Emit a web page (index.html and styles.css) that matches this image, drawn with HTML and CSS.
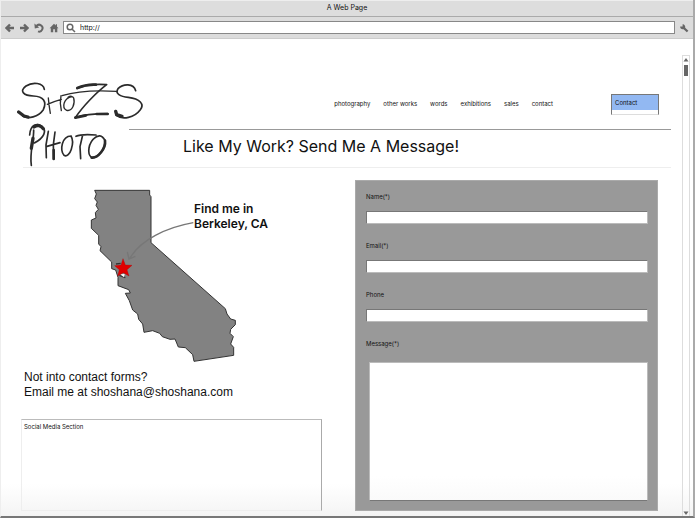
FILE: index.html
```html
<!DOCTYPE html>
<html lang="en">
<head>
<meta charset="utf-8">
<title>A Web Page</title>
<link rel="stylesheet" href="styles.css">
</head>
<body>
<div class="window">
  <div class="titlebar">A Web Page</div>
  <div class="toolbar">
    <button class="tool" aria-label="Back"><svg viewBox="0 0 10 10"><path d="M9 5H2M5 1.5L1.5 5L5 8.5"/></svg></button>
    <button class="tool" aria-label="Forward"><svg viewBox="0 0 10 10"><path d="M1 5H8M5 1.5L8.5 5L5 8.5"/></svg></button>
    <button class="tool tool-reload" aria-label="Reload"><svg viewBox="0 0 10 10"><path class="mid" d="M2.5 3A3.4 3.4 0 1 1 4 8.4"/><path class="solid" d="M.4 .6L.8 5.4L5.2 4.4Z"/></svg></button>
    <button class="tool" aria-label="Home"><svg viewBox="0 0 10 10"><path class="solid" d="M5 .8L.6 5.2H1.8V9.2H4.2V6.3H5.9V9.2H8.3V5.2H9.5L8 3.7V1.3H6.8V2.5Z"/></svg></button>
    <div class="address">
      <svg viewBox="0 0 10 10"><circle class="thin" cx="4" cy="4" r="2.8"/><path class="thin" d="M6.2 6.2L9 9"/></svg>
      <input type="text" value="http://" aria-label="Address">
    </div>
    <button class="tool" aria-label="Settings"><svg viewBox="0 0 10 10"><path class="solid" d="M3.6 1.2V3.6H1.2C.8 5.4 2.8 6.8 4.6 6.2L7.8 9.2L9.4 7.8L6.2 4.8C6.6 3 5.4 1 3.6 1.2Z"/></svg></button>
  </div>
  <div class="viewport">
    <main class="page">
      <header class="header">
        <svg class="logo" viewBox="0 0 384 258" role="img" aria-label="ShoZS Photo">
          <g transform="translate(-51 -36)">
            <path class="w5" d="M133 58C130 38 98 35 78 48C56 64 72 77 100 78C131 79 141 96 130 119C115 141 84 148 68 138"/>
            <path class="w10" d="M56 126L72 138L84 141"/>
            <path class="w4" d="M145 84L147 104L151 130M142 103C155 97 170 92 184 88M183 77L181 100L184 122M216 80C191 84 184 113 200 121C217 125 226 101 221 84C219 78 211 77 204 82"/>
            <path class="w5" d="M231 55C255 44 290 42 320 44C292 65 250 107 226 143C250 134 286 131 323 131"/>
            <path class="w7" d="M232 54C250 46 270 43 288 44M226 143L258 136M290 132H323"/>
            <path class="w4" d="M186 77C225 65 285 60 350 64"/>
            <path class="w5" d="M407 62C401 39 369 41 354 56C344 71 361 80 385 82C420 86 434 103 421 119C403 143 368 151 349 136"/>
            <path class="w10" d="M347 124L350 134L366 139"/>
            <path class="w5" d="M101 180C102 210 88 250 94 286M89 195C91 163 112 158 126 169C141 182 133 203 103 219"/>
            <path class="w10" d="M102 171C112 163 122 166 130 176M99 205L94 235"/>
            <path class="w5" d="M145 184L138 225L139 263M165 186L160 224L161 267M141 229L180 218M213 198C185 199 179 240 192 256C210 266 225 218 213 198"/>
            <path class="w5" d="M228 199C242 192 263 193 288 195M248 195L240 230L242 266M286 202C265 217 260 252 275 263C294 265 318 235 315 212C306 193 294 194 280 207"/>
            <path class="w7" d="M275 263C294 265 318 235 315 212M161 240V267"/>
          </g>
        </svg>
        <div class="masthead">
          <nav class="nav">
            <a href="#">photography</a>
            <a href="#">other works</a>
            <a href="#">words</a>
            <a href="#">exhibitions</a>
            <a href="#">sales</a>
            <a href="#">contact</a>
          </nav>
          <div class="submenu"><a href="#">Contact</a></div>
        </div>
        <h1>Like My Work? Send Me A Message!</h1>
      </header>
      <div class="columns">
        <section class="info">
          <figure class="map">
            <svg viewBox="0 0 600 570" role="img" aria-label="Map of California">
              <path class="state" d="M44 31H209V45L213 50V188L436 386L441 402L452 417L466 421V434L452 448L450 460L460 470L452 492L461 502V526L342 544L338 524L316 503L295 501L285 477L270 478L247 470L239 460L218 452L192 457L188 432L176 418L173 402L158 390L148 362L136 340L151 339L146 329L114 317V292L107 270L95 266V246L60 212L63 200L56 192V166L34 145V120L48 114L46 98L55 88L48 76L52 66L44 56L49 42Z"/>
              <path class="inlet" d="M108 252L122 250M118 286L136 293"/>
              <path class="bay" d="M121 283L134 282L132 292Z"/>
              <path class="arrow" d="M340 128C260 142 180 180 149 236M142 216L147 237L166 229"/>
              <path class="star" d="M129 236L136 255L156 256L141 269L147 288L130 278L113 288L118 269L104 257L123 255Z"/>
            </svg>
            <figcaption>Find me in<br>Berkeley, CA</figcaption>
          </figure>
          <p class="note">Not into contact forms?<br>Email me at shoshana@shoshana.com</p>
          <div class="social">Social Media Section</div>
        </section>
        <form class="form">
          <label for="name">Name(*)</label>
          <input id="name" type="text">
          <label for="email">Email(*)</label>
          <input id="email" type="email">
          <label for="phone">Phone</label>
          <input id="phone" type="tel">
          <label for="message">Message(*)</label>
          <textarea id="message"></textarea>
        </form>
      </div>
    </main>
    <div class="scrollbar">
      <svg viewBox="0 0 6 4"><path d="M3 0L5.5 3.5H.5Z"/></svg>
      <div class="thumb"></div>
      <svg class="down" viewBox="0 0 6 4"><path d="M3 4L5.5 .5H.5Z"/></svg>
    </div>
  </div>
</div>
</body>
</html>
```
FILE: styles.css
```css
* { box-sizing: border-box; }

body {
  margin: 0;
  background: #fff;
  color: #111;
  font-family: Inter, "Liberation Sans", sans-serif;
  font-size: 6px;
  line-height: 12px;
}

a { color: inherit; text-decoration: none; }

.window {
  display: flex;
  flex-direction: column;
  min-height: 100vh;
  border-left: 1px solid #eee;
  border-right: 2px solid #aaa;
  border-bottom: 2px solid #777;
}

.titlebar {
  height: 17px;
  border-top: 1px solid #eee;
  border-bottom: 1px solid #aaa;
  background: #ddd;
  line-height: 14px;
  text-align: center;
}

.toolbar {
  display: flex;
  align-items: center;
  gap: 4px;
  height: 22px;
  padding: 0 4px;
  border-bottom: 1px solid #ccc;
  background: #dcdcdc;
}

.tool {
  display: flex;
  width: 10px;
  height: 10px;
  padding: 0;
  border: 0;
  background: none;
}

.tool-reload { margin: 0 1px; }

.toolbar svg {
  flex: none;
  width: 10px;
  height: 10px;
  fill: none;
  stroke: #666;
  stroke-width: 2.4;
}

.toolbar .thin { stroke-width: 1.5; }
.toolbar .mid { stroke-width: 2; }
.toolbar .solid { fill: #666; stroke: none; }

.titlebar,
.address input { font-size: 7px; }

.address {
  display: flex;
  flex: 1;
  align-items: center;
  gap: 4px;
  height: 13px;
  padding-left: 2px;
  border: 1px solid #888;
  background: #fff;
}

.address input {
  flex: 1;
  min-width: 0;
  padding: 0;
  border: 0;
  color: #111;
  font-family: inherit;
}

.viewport {
  display: flex;
  flex: 1;
  background: linear-gradient(to top, #f4f4f4, #fff 32px);
}

.page {
  display: flex;
  flex: 1;
  flex-direction: column;
  padding: 43px 11px 5px 20px;
}

.header {
  display: grid;
  grid-template-columns: 106px 1fr;
  grid-template-rows: 48px 37px;
  margin-left: 2px;
  border-bottom: 1px solid #eee;
}

.logo {
  grid-row: 1 / 3;
  width: 128px;
  height: 86px;
  margin-left: -6px;
  fill: none;
  stroke: #2b2b2b;
  stroke-linecap: round;
  stroke-linejoin: round;
}

.w4 { stroke-width: 4; }
.w5 { stroke-width: 5; }
.w7 { stroke-width: 8; }
.w10 { stroke-width: 10; }

.masthead {
  display: flex;
  justify-content: flex-end;
  padding: 12px 12px 0 0;
  border-bottom: 1px solid #999;
}

.nav {
  display: flex;
  gap: 13px;
  padding-top: 4px;
}

.submenu {
  width: 48px;
  height: 21px;
  margin-left: 58px;
  border: 1px solid #777;
  border-bottom-color: #ddd;
  background: #fff;
}

.submenu a {
  display: block;
  padding: 2px 3px 1px;
  background: #92b8f2;
}

h1 {
  margin: 4px 0 0 54px;
  font-size: 16px;
  font-weight: 400;
  line-height: 24px;
}

.columns {
  display: grid;
  flex: 1;
  grid-template-columns: 301fr 303fr;
  gap: 33px;
  padding: 12px 13px 0 0;
}

.info {
  display: flex;
  flex-direction: column;
}

.map {
  position: relative;
  height: 190px;
  margin: 0 0 0 59px;
}

.map svg {
  display: block;
  width: 200px;
  height: 190px;
}

.map figcaption {
  position: absolute;
  top: 21px;
  left: 114px;
  font-size: 12px;
  font-weight: 600;
  line-height: 15px;
}

.state { fill: #828282; stroke: #333; stroke-width: 3; }
.inlet { fill: none; stroke: #333; stroke-width: 4; }
.bay { fill: #fff; }
.arrow { fill: none; stroke: #777; stroke-width: 4; }
.star { fill: #e00000; stroke: #a00; stroke-width: 1; }

.note {
  margin: 0 0 19px 3px;
  font-family: "Liberation Sans", sans-serif;
  font-size: 12px;
  line-height: 15px;
}

.social {
  flex: 1;
  padding: 1px 2px;
  border: 1px solid #eee;
  border-top-color: #bbb;
  border-right-color: #aaa;
}

.form {
  display: flex;
  flex-direction: column;
  padding: 10px 9px 9px 10px;
  border: 1px solid #aaa;
  background: #999;
}

.form label { margin-bottom: 8px; }

.form input {
  height: 13px;
  margin: 0 0 16px;
  padding: 0 3px;
  border: 1px solid #bbb;
  border-top-color: #777;
  border-left-color: #777;
  background: #fff;
  font: inherit;
}

.form textarea {
  flex: 1;
  min-height: 138px;
  margin: 4px 0 0 3px;
  padding: 3px;
  border: 1px solid #bbb;
  border-bottom-color: #777;
  background: linear-gradient(to top, #fafafa, #fff 24px);
  font: inherit;
  resize: none;
}

.scrollbar {
  display: flex;
  flex-direction: column;
  align-items: center;
  gap: 3px;
  width: 8px;
  margin: 16px 3px 0 0;
  padding: 2px 0 1px;
  border: 1px solid #ddd;
  border-bottom: 0;
}

.scrollbar svg {
  width: 6px;
  height: 4px;
  fill: #666;
}

.thumb {
  width: 4px;
  height: 11px;
  background: #666;
}

.down { margin-top: auto; }
```
